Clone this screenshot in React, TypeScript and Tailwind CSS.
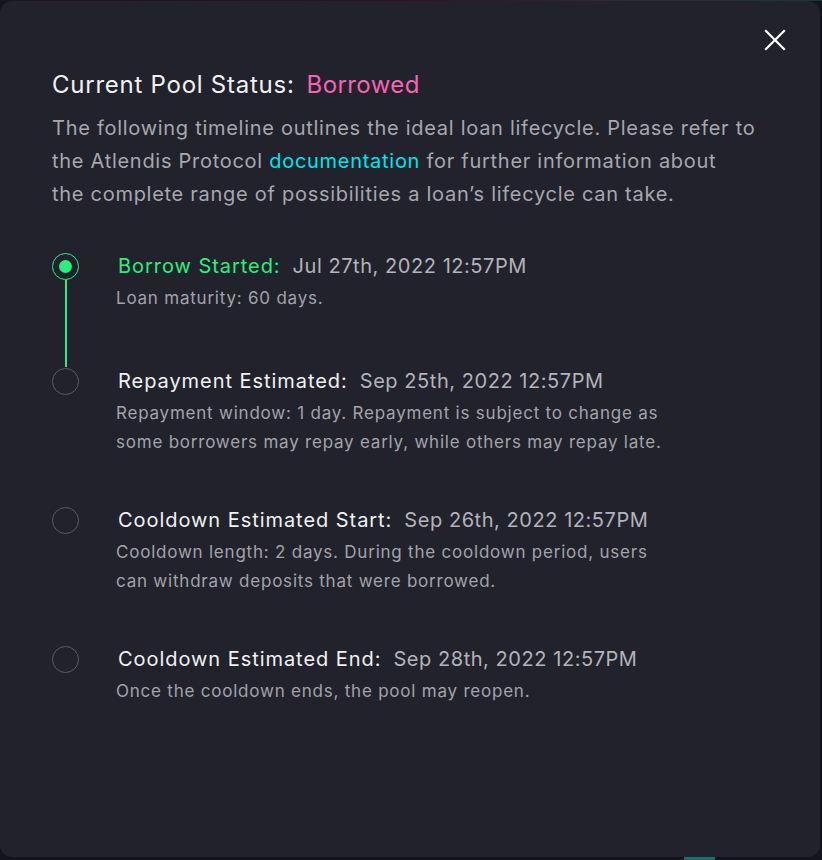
import React from "react";

const font = { fontFamily: "Inter, 'Noto Sans', sans-serif" };

function Dot({ active }: { active?: boolean }) {
  if (active) {
    return (
      <div className="w-[27px] h-[27px] rounded-full border-[1.5px] border-[#2bef7c] flex items-center justify-center shrink-0">
        <div className="w-[13px] h-[13px] rounded-full bg-[#2bef7c]" />
      </div>
    );
  }
  return <div className="w-[27px] h-[27px] rounded-full border border-[#5b5c67] shrink-0" />;
}

type Item = {
  title: string;
  date: string;
  lines: string[];
  active?: boolean;
  line?: boolean;
  pb: string;
};

const items: Item[] = [
  {
    title: "Borrow Started:",
    date: "Jul 27th, 2022 12:57PM",
    lines: ["Loan maturity: 60 days."],
    active: true,
    line: true,
    pb: "pb-[54px]",
  },
  {
    title: "Repayment Estimated:",
    date: "Sep 25th, 2022 12:57PM",
    lines: [
      "Repayment window: 1 day. Repayment is subject to change as",
      "some borrowers may repay early, while others may repay late.",
    ],
    pb: "pb-[49px]",
  },
  {
    title: "Cooldown Estimated Start:",
    date: "Sep 26th, 2022 12:57PM",
    lines: [
      "Cooldown length: 2 days. During the cooldown period, users",
      "can withdraw deposits that were borrowed.",
    ],
    pb: "pb-[49px]",
  },
  {
    title: "Cooldown Estimated End:",
    date: "Sep 28th, 2022 12:57PM",
    lines: ["Once the cooldown ends, the pool may reopen."],
    pb: "pb-0",
  },
];

export default function App() {
  return (
    <div className="w-[822px] h-[860px] bg-[#14151b] flex flex-col overflow-hidden" style={font}>
      <div className="h-[1px] w-full bg-gradient-to-r from-[#1a1420] via-[#3a0d28] to-[#0f3b3a] shrink-0" />
      <div className="relative w-[820px] h-[856px] bg-[#21222c] rounded-[12px] pl-[52px] pt-[68px] shrink-0">
        <button className="absolute right-[32px] top-[26px] w-[26px] h-[26px] flex items-center justify-center text-white">
          <svg width="22" height="22" viewBox="0 0 22 22" fill="none">
            <path d="M2 2L20 20M20 2L2 20" stroke="#ffffff" strokeWidth="2.2" strokeLinecap="square" />
          </svg>
        </button>

        <div className="text-[24px] leading-[32px] text-[#f1f1f3] tracking-[0.75px]">
          Current Pool Status:
          <span className="ml-[12px] text-[#f463b6] tracking-[0.4px]">Borrowed</span>
        </div>

        <div className="mt-[11px] text-[20px] leading-[33px] text-[#a7a7ae] tracking-[0.72px]">
          <div className="whitespace-nowrap">The following timeline outlines the ideal loan lifecycle. Please refer to</div>
          <div className="whitespace-nowrap">
            the Atlendis Protocol <span className="text-[#00e6f0]">documentation</span> for further information about
          </div>
          <div className="whitespace-nowrap">the complete range of possibilities a loan’s lifecycle can take.</div>
        </div>

        <div className="mt-[41px] flex flex-col">
          {items.map((it, i) => (
            <div key={i} className="flex items-stretch">
              <div className="w-[27px] flex flex-col items-center pt-[1px] shrink-0">
                <Dot active={it.active} />
                {it.line && <div className="w-[2px] flex-1 bg-[#2bef7c]" />}
              </div>
              <div className={`ml-[39px] ${it.pb}`}>
                <div className="text-[20px] leading-[28px] whitespace-nowrap">
                  <span className={`tracking-[0.95px] ${it.active ? "text-[#2bef7c]" : "text-[#f1f1f3]"}`}>{it.title}</span>
                  <span className="ml-[12px] text-[#b3b3ba] tracking-[0.55px]">{it.date}</span>
                </div>
                <div className="mt-[4px] text-[17px] leading-[29px] text-[#a3a3aa] tracking-[0.78px] -ml-[2px]">
                  {it.lines.map((l, j) => (
                    <div key={j} className="whitespace-nowrap">{l}</div>
                  ))}
                </div>
              </div>
            </div>
          ))}
        </div>
      </div>
      <div className="flex-1 relative">
        <div className="absolute left-[684px] top-0 w-[31px] h-[3px] bg-[#17706c]" />
      </div>
    </div>
  );
}
